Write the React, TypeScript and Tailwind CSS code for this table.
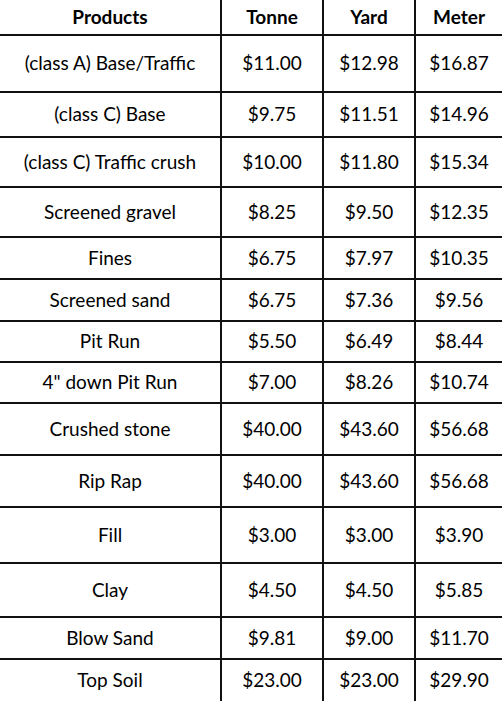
const rows: { name: string; tonne: string; yard: string; meter: string; h: string }[] = [
  { name: "(class A) Base/Traffic", tonne: "$11.00", yard: "$12.98", meter: "$16.87", h: "h-[57px]" },
  { name: "(class C) Base", tonne: "$9.75", yard: "$11.51", meter: "$14.96", h: "h-[45px]" },
  { name: "(class C) Traffic crush", tonne: "$10.00", yard: "$11.80", meter: "$15.34", h: "h-[50px]" },
  { name: "Screened gravel", tonne: "$8.25", yard: "$9.50", meter: "$12.35", h: "h-[50px]" },
  { name: "Fines", tonne: "$6.75", yard: "$7.97", meter: "$10.35", h: "h-[42px]" },
  { name: "Screened sand", tonne: "$6.75", yard: "$7.36", meter: "$9.56", h: "h-[42px]" },
  { name: "Pit Run", tonne: "$5.50", yard: "$6.49", meter: "$8.44", h: "h-[41px]" },
  { name: '4" down Pit Run', tonne: "$7.00", yard: "$8.26", meter: "$10.74", h: "h-[41px]" },
  { name: "Crushed stone", tonne: "$40.00", yard: "$43.60", meter: "$56.68", h: "h-[52px]" },
  { name: "Rip Rap", tonne: "$40.00", yard: "$43.60", meter: "$56.68", h: "h-[52px]" },
  { name: "Fill", tonne: "$3.00", yard: "$3.00", meter: "$3.90", h: "h-[56px]" },
  { name: "Clay", tonne: "$4.50", yard: "$4.50", meter: "$5.85", h: "h-[54px]" },
  { name: "Blow Sand", tonne: "$9.81", yard: "$9.00", meter: "$11.70", h: "h-[42px]" },
  { name: "Top Soil", tonne: "$23.00", yard: "$23.00", meter: "$29.90", h: "h-[41px]" },
];

const cell = "flex items-center justify-center border-r-2 border-[#111]";

export default function App() {
  return (
    <div className="w-[502px] h-[701px] overflow-hidden bg-white text-black font-['Lato',sans-serif] text-[19px]">
      <div className="flex h-[36px] border-b-2 border-[#111] font-bold">
        <div className={`${cell} w-[222px]`}>Products</div>
        <div className={`${cell} w-[102px]`}>Tonne</div>
        <div className={`${cell} w-[92px]`}>Yard</div>
        <div className="flex flex-1 items-center justify-center">Meter</div>
      </div>
      {rows.map((r, i) => (
        <div
          key={r.name}
          className={`flex ${r.h} ${i < rows.length - 1 ? "border-b-2 border-[#111]" : ""}`}
        >
          <div className={`${cell} w-[222px]`}>{r.name}</div>
          <div className={`${cell} w-[102px]`}>{r.tonne}</div>
          <div className={`${cell} w-[92px]`}>{r.yard}</div>
          <div className="flex flex-1 items-center justify-center">{r.meter}</div>
        </div>
      ))}
    </div>
  );
}
